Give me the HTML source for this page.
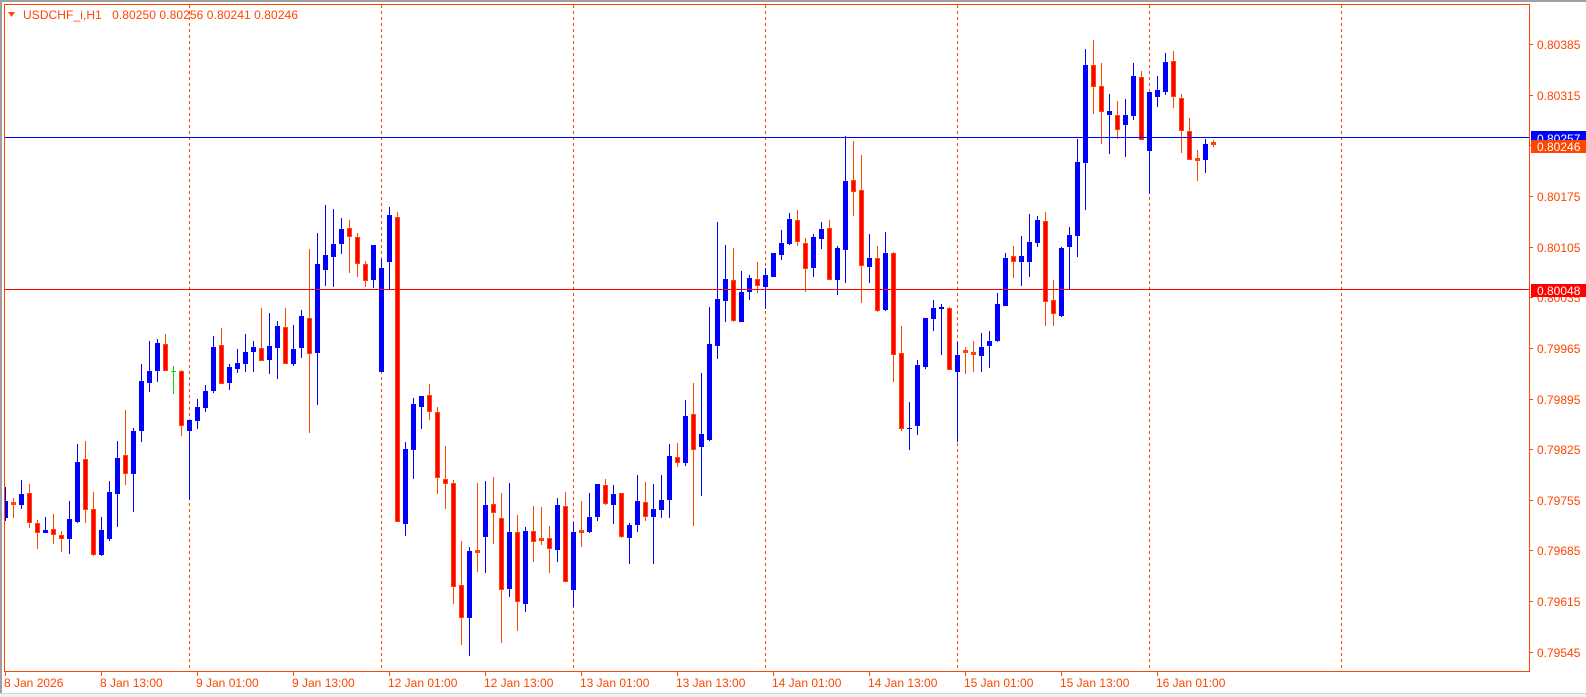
<!DOCTYPE html>
<html><head><meta charset="utf-8"><style>
html,body{margin:0;padding:0;background:#fff;width:1586px;height:697px;overflow:hidden}
svg{display:block}
text{font-family:"Liberation Sans",sans-serif;font-size:12px}
</style></head><body>
<svg width="1586" height="697" viewBox="0 0 1586 697" xmlns="http://www.w3.org/2000/svg">
<rect x="0" y="0" width="1586" height="697" fill="#fff"/>
<rect x="0" y="0" width="1586" height="2" fill="#a0a0a0"/>
<rect x="0" y="0" width="2" height="697" fill="#a0a0a0"/>
<rect x="0" y="693" width="1586" height="4" fill="#f0f0f0"/>
<rect x="0" y="693" width="1586" height="1" fill="#d8d8d8"/>
<defs><clipPath id="c"><rect x="5" y="5" width="1524" height="666"/></clipPath></defs>
<g clip-path="url(#c)">
<g stroke="#ff4500" stroke-width="1" stroke-dasharray="3 3">
<path d="M189.5 5V671M381.5 5V671M573.5 5V671M765.5 5V671M957.5 5V671M1149.5 5V671M1341.5 5V671"/>
</g>
<path stroke="#0000ff" stroke-width="1" fill="none" d="M5.5 487V521M21.5 480V509M45.5 517V533M69.5 501V554M77.5 444V523M101.5 517V556M109.5 481V541M117.5 441V527M133.5 428V512M141.5 364V442M149.5 341V392M157.5 339V382M189.5 420V500M197.5 399V429M205.5 385V412M213.5 336V393M229.5 364V390M237.5 349V373M245.5 334V372M253.5 341V372M269.5 313V374M277.5 321V379M293.5 325V366M301.5 310V358M317.5 233V405M325.5 205V286M333.5 209V287M341.5 218V254M373.5 245V288M381.5 259V372M389.5 207V290M405.5 442V536M413.5 398V479M421.5 396V429M469.5 547V656M485.5 481V573M509.5 483V597M525.5 527V612M557.5 498V562M573.5 522V607M589.5 493V533M597.5 484V521M613.5 485V524M629.5 523V564M637.5 475V532M653.5 484V564M661.5 475V518M669.5 444V518M685.5 400V466M701.5 373V496M709.5 307V441M717.5 222V359M725.5 245V322M741.5 271V322M749.5 275V300M765.5 268V309M773.5 253V277M781.5 230V260M789.5 213V245M813.5 234V277M821.5 222V249M837.5 246V295M845.5 136V283M869.5 234V283M885.5 232V311M909.5 402V450M917.5 360V435M925.5 318V369M933.5 300V331M941.5 304V355M957.5 342V442M981.5 333V372M989.5 331V368M997.5 293V342M1005.5 253V306M1021.5 236V286M1029.5 214V277M1037.5 216V247M1061.5 247V317M1069.5 227V289M1077.5 139V257M1085.5 49V210M1109.5 94V154M1125.5 99V157M1133.5 63V120M1149.5 92V194M1157.5 76V107M1165.5 53V95M1205.5 139V173"/>
<path fill="#0000ff" d="M3 501h5V518h-5zM19 494h5V505h-5zM43 530h5V533h-5zM67 519h5V539h-5zM75 462h5V522h-5zM99 530h5V555h-5zM107 492h5V539h-5zM115 458h5V494h-5zM131 431h5V474h-5zM139 381h5V431h-5zM147 371h5V383h-5zM155 343h5V371h-5zM187 420h5V431h-5zM195 407h5V421h-5zM203 391h5V408h-5zM211 347h5V391h-5zM227 367h5V383h-5zM235 363h5V369h-5zM243 352h5V364h-5zM251 347h5V352h-5zM267 346h5V360h-5zM275 326h5V348h-5zM291 349h5V364h-5zM299 316h5V348h-5zM315 264h5V353h-5zM323 255h5V270h-5zM331 244h5V257h-5zM339 229h5V244h-5zM371 245h5V280h-5zM379 268h5V372h-5zM387 215h5V262h-5zM403 449h5V524h-5zM411 404h5V450h-5zM419 396h5V407h-5zM467 551h5V618h-5zM483 505h5V537h-5zM507 532h5V589h-5zM523 531h5V604h-5zM555 505h5V550h-5zM571 532h5V590h-5zM587 517h5V532h-5zM595 484h5V517h-5zM611 494h5V505h-5zM627 525h5V538h-5zM635 501h5V525h-5zM651 509h5V517h-5zM659 500h5V510h-5zM667 456h5V500h-5zM683 416h5V463h-5zM699 434h5V447h-5zM707 344h5V440h-5zM715 299h5V346h-5zM723 279h5V301h-5zM739 292h5V322h-5zM747 278h5V292h-5zM763 275h5V287h-5zM771 253h5V277h-5zM779 243h5V255h-5zM787 219h5V244h-5zM811 237h5V268h-5zM819 229h5V239h-5zM835 248h5V280h-5zM843 181h5V250h-5zM867 258h5V267h-5zM883 253h5V310h-5zM907 428h5V429h-5zM915 365h5V426h-5zM923 318h5V367h-5zM931 308h5V319h-5zM939 307h5V309h-5zM955 355h5V372h-5zM979 347h5V356h-5zM987 341h5V346h-5zM995 304h5V341h-5zM1003 258h5V306h-5zM1019 256h5V262h-5zM1027 242h5V262h-5zM1035 220h5V243h-5zM1059 248h5V316h-5zM1067 235h5V247h-5zM1075 162h5V236h-5zM1083 65h5V163h-5zM1107 111h5V115h-5zM1123 115h5V125h-5zM1131 76h5V116h-5zM1147 92h5V151h-5zM1155 90h5V97h-5zM1163 62h5V92h-5zM1203 144h5V160h-5z"/>
<path stroke="#ff4500" stroke-width="1" fill="none" d="M13.5 498V518M29.5 484V528M37.5 520V549M53.5 514V544M61.5 531V552M85.5 441V523M93.5 492V556M125.5 410V485M165.5 334V371M181.5 370V436M221.5 328V384M261.5 308V361M285.5 308V364M309.5 249V433M349.5 220V273M357.5 233V277M365.5 261V287M397.5 212V522M429.5 384V420M437.5 407V494M445.5 446V509M453.5 480V604M461.5 541V645M477.5 483V572M493.5 477V544M501.5 493V643M517.5 515V631M533.5 506V562M541.5 507V545M549.5 526V573M565.5 492V582M581.5 501V547M605.5 479V505M621.5 493V538M645.5 482V521M677.5 443V467M693.5 383V526M733.5 248V322M757.5 262V293M797.5 210V246M805.5 238V292M829.5 220V280M853.5 141V216M861.5 155V303M877.5 246V312M893.5 252V382M901.5 326V431M949.5 307V370M965.5 347V374M973.5 341V372M1013.5 246V278M1045.5 212V326M1053.5 280V326M1093.5 40V114M1101.5 63V144M1117.5 101V139M1141.5 71V140M1173.5 51V108M1181.5 94V153M1189.5 118V160M1197.5 150V181M1213.5 140V147"/>
<path fill="#ff4500" d="M11 502h5V505h-5zM27 493h5V523h-5zM35 523h5V533h-5zM51 529h5V535h-5zM59 535h5V539h-5zM83 459h5V510h-5zM91 509h5V555h-5zM123 455h5V474h-5zM163 344h5V371h-5zM179 371h5V426h-5zM219 345h5V384h-5zM259 348h5V361h-5zM283 327h5V364h-5zM307 318h5V354h-5zM347 228h5V237h-5zM355 237h5V264h-5zM363 264h5V281h-5zM395 217h5V522h-5zM427 395h5V412h-5zM435 412h5V478h-5zM443 479h5V484h-5zM451 483h5V587h-5zM459 585h5V618h-5zM475 550h5V553h-5zM491 504h5V513h-5zM499 518h5V590h-5zM515 532h5V602h-5zM531 531h5V542h-5zM539 538h5V541h-5zM547 538h5V549h-5zM563 506h5V582h-5zM579 530h5V533h-5zM603 485h5V504h-5zM619 493h5V537h-5zM643 502h5V517h-5zM675 457h5V463h-5zM691 414h5V450h-5zM731 280h5V321h-5zM755 279h5V286h-5zM795 220h5V242h-5zM803 243h5V269h-5zM827 228h5V280h-5zM851 180h5V192h-5zM859 190h5V266h-5zM875 258h5V311h-5zM891 253h5V355h-5zM899 353h5V429h-5zM947 308h5V370h-5zM963 350h5V353h-5zM971 352h5V355h-5zM1011 256h5V262h-5zM1043 221h5V302h-5zM1051 300h5V314h-5zM1091 65h5V87h-5zM1099 86h5V112h-5zM1115 115h5V130h-5zM1139 77h5V140h-5zM1171 61h5V97h-5zM1179 98h5V131h-5zM1187 131h5V160h-5zM1195 158h5V161h-5zM1211 142h5V145h-5z"/>
<path fill="#ff0000" d="M28 494h3V522h-3zM36 524h3V532h-3zM52 530h3V534h-3zM60 536h3V538h-3zM84 460h3V509h-3zM92 510h3V554h-3zM124 456h3V473h-3zM164 345h3V370h-3zM180 372h3V425h-3zM220 346h3V383h-3zM260 349h3V360h-3zM284 328h3V363h-3zM308 319h3V353h-3zM348 229h3V236h-3zM356 238h3V263h-3zM364 265h3V280h-3zM396 218h3V521h-3zM428 396h3V411h-3zM436 413h3V477h-3zM444 480h3V483h-3zM452 484h3V586h-3zM460 586h3V617h-3zM492 505h3V512h-3zM500 519h3V589h-3zM516 533h3V601h-3zM532 532h3V541h-3zM548 539h3V548h-3zM564 507h3V581h-3zM604 486h3V503h-3zM620 494h3V536h-3zM644 503h3V516h-3zM676 458h3V462h-3zM692 415h3V449h-3zM732 281h3V320h-3zM756 280h3V285h-3zM796 221h3V241h-3zM804 244h3V268h-3zM828 229h3V279h-3zM852 181h3V191h-3zM860 191h3V265h-3zM876 259h3V310h-3zM892 254h3V354h-3zM900 354h3V428h-3zM948 309h3V369h-3zM1012 257h3V261h-3zM1044 222h3V301h-3zM1052 301h3V313h-3zM1092 66h3V86h-3zM1100 87h3V111h-3zM1116 116h3V129h-3zM1140 78h3V139h-3zM1172 62h3V96h-3zM1180 99h3V130h-3zM1188 132h3V159h-3z"/>
<path stroke="#00dd00" stroke-width="1" d="M173.5 366V394M171 371.5h5"/>
<path stroke="#0000ff" stroke-width="1" d="M5 137.5H1529"/>
<path stroke="#ff0000" stroke-width="1" d="M5 289.5H1529"/>
</g>
<rect x="4.5" y="4.5" width="1525" height="667" fill="none" stroke="#ff4500" stroke-width="1"/>
<path d="M8 12h7l-3.5 5z" fill="#ff4500"/>
<text x="23" y="19" fill="#ff4500" textLength="275" lengthAdjust="spacing">USDCHF_i,H1&#160;&#160; 0.80250 0.80256 0.80241 0.80246</text>
<path stroke="#ff4500" stroke-width="1" d="M1530 44.5h3M1530 95.5h3M1530 145.5h3M1530 196.5h3M1530 247.5h3M1530 297.5h3M1530 348.5h3M1530 399.5h3M1530 449.5h3M1530 500.5h3M1530 550.5h3M1530 601.5h3M1530 652.5h3"/>
<g fill="#ff4500">
<text x="1537" y="49">0.80385</text>
<text x="1537" y="100">0.80315</text>
<text x="1537" y="201">0.80175</text>
<text x="1537" y="252">0.80105</text>
<text x="1537" y="302">0.80035</text>
<text x="1537" y="353">0.79965</text>
<text x="1537" y="404">0.79895</text>
<text x="1537" y="454">0.79825</text>
<text x="1537" y="505">0.79755</text>
<text x="1537" y="555">0.79685</text>
<text x="1537" y="606">0.79615</text>
<text x="1537" y="657">0.79545</text>
</g>
<rect x="1531" y="131" width="55" height="10" fill="#0000ff"/>
<text x="1537" y="143" fill="#fff">0.80257</text>
<rect x="1531" y="140" width="55" height="13" fill="#ff4500"/>
<text x="1537" y="151" fill="#fff">0.80246</text>
<rect x="1531" y="284" width="55" height="13" fill="#ff0000"/>
<text x="1537" y="295" fill="#fff">0.80048</text>
<path stroke="#ff4500" stroke-width="1" d="M5.5 672V676M101.5 672V676M197.5 672V676M293.5 672V676M389.5 672V676M485.5 672V676M581.5 672V676M677.5 672V676M773.5 672V676M869.5 672V676M965.5 672V676M1061.5 672V676M1157.5 672V676"/>
<g fill="#ff4500">
<text x="4" y="687">8 Jan 2026</text>
<text x="100" y="687">8 Jan 13:00</text>
<text x="196" y="687">9 Jan 01:00</text>
<text x="292" y="687">9 Jan 13:00</text>
<text x="388" y="687">12 Jan 01:00</text>
<text x="484" y="687">12 Jan 13:00</text>
<text x="580" y="687">13 Jan 01:00</text>
<text x="676" y="687">13 Jan 13:00</text>
<text x="772" y="687">14 Jan 01:00</text>
<text x="868" y="687">14 Jan 13:00</text>
<text x="964" y="687">15 Jan 01:00</text>
<text x="1060" y="687">15 Jan 13:00</text>
<text x="1156" y="687">16 Jan 01:00</text>
</g>
</svg>
</body></html>
